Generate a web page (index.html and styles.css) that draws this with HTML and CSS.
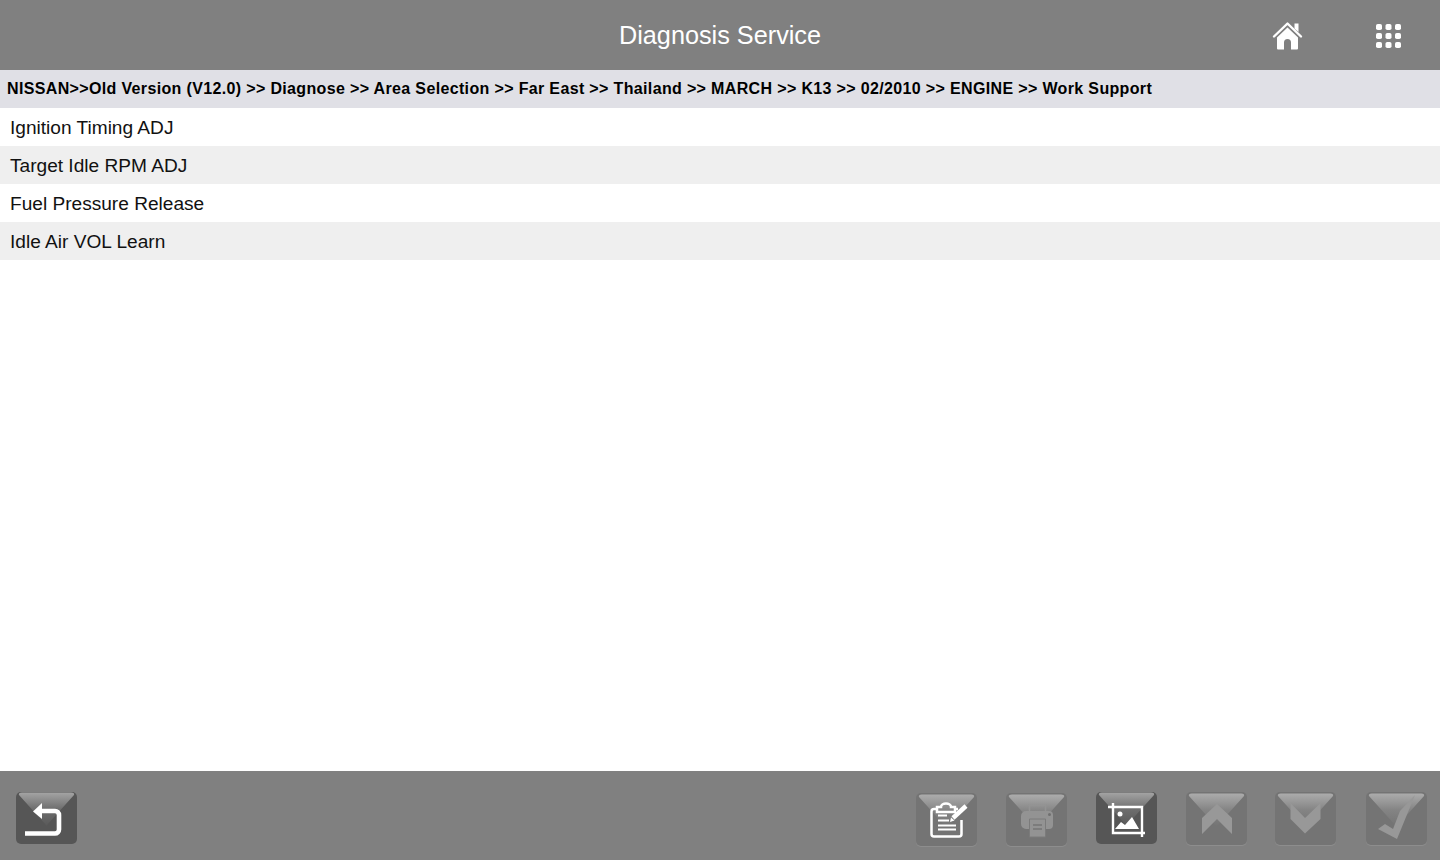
FILE: index.html
```html
<!DOCTYPE html>
<html lang="en">
<head>
<meta charset="utf-8">
<title>Diagnosis Service</title>
<link rel="stylesheet" href="styles.css">
</head>
<body>
<div class="app">
  <header class="topbar">
    <h1 class="title">Diagnosis Service</h1>
    <a class="home-icon">
      <svg width="32" height="32" viewBox="0 0 32 32"><path d="M2 16.500 15.500 3.500 29 16.500" fill="none" stroke="#fff" stroke-width="2.400" stroke-linecap="round" stroke-linejoin="round"/><path d="M22.500 3.500h4v8.500l-4-3.600z" fill="#fff"/><path fill-rule="evenodd" d="M15.500 7.500 26 17.500V28.500a1 1 0 0 1-1 1H6a1 1 0 0 1-1-1V17.500zM12 29.500h7V22.500a3.500 3.500 0 0 0-7 0z" fill="#fff"/></svg>
    </a>
    <a class="grid-icon">
      <svg width="28" height="28" viewBox="0 0 28 28" fill="#fff"><rect x="1" y="2" width="6" height="6" rx="1.800"/><rect x="10.500" y="2" width="6" height="6" rx="1.800"/><rect x="20" y="2" width="6" height="6" rx="1.800"/><rect x="1" y="11" width="6" height="6" rx="1.800"/><rect x="10.500" y="11" width="6" height="6" rx="1.800"/><rect x="20" y="11" width="6" height="6" rx="1.800"/><rect x="1" y="20" width="6" height="6" rx="1.800"/><rect x="10.500" y="20" width="6" height="6" rx="1.800"/><rect x="20" y="20" width="6" height="6" rx="1.800"/></svg>
    </a>
  </header>
  <nav class="crumbs">NISSAN&gt;&gt;Old Version (V12.0) &gt;&gt; Diagnose &gt;&gt; Area Selection &gt;&gt; Far East &gt;&gt; Thailand &gt;&gt; MARCH &gt;&gt; K13 &gt;&gt; 02/2010 &gt;&gt; ENGINE &gt;&gt; Work Support</nav>
  <main class="list">
    <div class="row">Ignition Timing ADJ</div>
    <div class="row">Target Idle RPM ADJ</div>
    <div class="row">Fuel Pressure Release</div>
    <div class="row">Idle Air VOL Learn</div>
  </main>
  <footer class="toolbar">
    <button class="btn btn-dark">
      <svg class="shine" width="61" height="52" viewBox="0 0 61 52"><defs><linearGradient id="g0" x1="0" y1="0" x2="0" y2="1"><stop offset="0" stop-color="#a4a4a4"/><stop offset="0.500" stop-color="#6e6e6e"/><stop offset="1" stop-color="#5a5a5a"/></linearGradient></defs><path d="M6 0.500H55Q59 0.500 58 3L31 33Q30.500 34 30 33L3 3Q2 0.500 6 0.500z" fill="url(#g0)"/>
      <path d="M9 41.500H39a4 4 0 0 0 4-4V23a4 4 0 0 0-4-4H24" fill="none" stroke="#fff" stroke-width="4.600"/><path d="M26 11V27L17 19.500z" fill="#fff"/></svg>
    </button>
    <div class="btn-group">
      <button class="btn btn-low">
        <svg class="shine" width="61" height="52" viewBox="0 0 61 52"><defs><linearGradient id="g1" x1="0" y1="0" x2="0" y2="1"><stop offset="0" stop-color="#acacac"/><stop offset="0.500" stop-color="#848484"/><stop offset="1" stop-color="#747474"/></linearGradient></defs><path d="M6 0.500H55Q59 0.500 58 3L31 33Q30.500 34 30 33L3 3Q2 0.500 6 0.500z" fill="url(#g1)"/>
        <path d="M20 15H18a2.500 2.500 0 0 0-2.500 2.500V40a2.500 2.500 0 0 0 2.500 2.500H43a2.500 2.500 0 0 0 2.500-2.500V26M40 15H42" fill="none" stroke="#fff" stroke-width="2.500"/><path d="M21 18V13H25a5 3.500 0 0 1 10 0H39V18z" fill="none" stroke="#fff" stroke-width="2.500"/><path d="M22 21.500H31M22 26.500H33M22 31.500H40M22 35.500H40" stroke="#fff" stroke-width="2.200"/><path d="M37 24 50 12" stroke="#fff" stroke-width="4.500"/><path d="M34 28 35 23.500 38.500 26.500z" fill="#fff"/></svg>
      </button>
      <button class="btn btn-low">
        <svg class="shine" width="61" height="52" viewBox="0 0 61 52"><path d="M6 0.500H55Q59 0.500 58 3L31 33Q30.500 34 30 33L3 3Q2 0.500 6 0.500z" fill="url(#g1)"/>
        <path d="M23.500 17V11.500H39.500V17" fill="none" stroke="#939393" stroke-width="1.500"/><path d="M20 17H43a4 4 0 0 1 4 4V31a4 4 0 0 1-4 4H20a5 5 0 0 1-5-5V22a5 5 0 0 1 5-5z" fill="#939393"/><path d="M23.500 25H39.500V43H23.500z" fill="#939393" stroke="#7b7b7b"/><path d="M27 31H36M27 35H36" stroke="#767676" stroke-width="1.500"/><circle cx="43.500" cy="20.500" r="1.500" fill="#707070"/></svg>
      </button>
      <button class="btn btn-dark btn-dark-low">
        <svg class="shine" width="61" height="52" viewBox="0 0 61 52"><path d="M6 0.500H55Q59 0.500 58 3L31 33Q30.500 34 30 33L3 3Q2 0.500 6 0.500z" fill="url(#g0)"/>
        <path d="M12 15H46V45M17 11V41H49" fill="none" stroke="#fff" stroke-width="2.400"/><circle cx="24" cy="22" r="2.500" fill="#fff"/><path d="M19 37 25 30 29 33 36 25 43 37z" fill="#fff"/></svg>
      </button>
      <button class="btn">
        <svg class="shine" width="61" height="52" viewBox="0 0 61 52"><path d="M6 0.500H55Q59 0.500 58 3L31 33Q30.500 34 30 33L3 3Q2 0.500 6 0.500z" fill="url(#g1)"/><path d="M31 11 46 25V41L31 26 16 41V25z" fill="#989898"/></svg>
      </button>
      <button class="btn btn-shift">
        <svg class="shine" width="61" height="52" viewBox="0 0 61 52"><path d="M6 0.500H55Q59 0.500 58 3L31 33Q30.500 34 30 33L3 3Q2 0.500 6 0.500z" fill="url(#g1)"/><path d="M15.500 10 30 25 45.500 10V26L30 40.500 15.500 26z" fill="#989898"/></svg>
      </button>
      <button class="btn">
        <svg class="shine" width="61" height="52" viewBox="0 0 61 52"><path d="M6 0.500H55Q59 0.500 58 3L31 33Q30.500 34 30 33L3 3Q2 0.500 6 0.500z" fill="url(#g1)"/><path d="M49 2 34 18 27 36 19 31 12 36 31 46z" fill="#989898"/></svg>
      </button>
    </div>
  </footer>
</div>
</body>
</html>
```
FILE: styles.css
```css
* { box-sizing: border-box; }
html, body { margin: 0; padding: 0; height: 100%; }
body { font-family: "Liberation Sans", Arial, sans-serif; background: #fff; color: #000; overflow: hidden; }
.app { display: flex; flex-direction: column; height: 860px; width: 1440px; }

.topbar { height: 70px; background: #808080; position: relative; display: flex; align-items: center; justify-content: center; }
.title { margin: 0; font-size: 25.250px; font-weight: 400; color: #fff; }
.home-icon, .grid-icon { position: absolute; display: block; line-height: 0; }
.home-icon { left: 1272px; top: 20px; }
.grid-icon { left: 1375px; top: 22px; }

.crumbs { height: 38px; background: #e0e0e6; padding-left: 7px; display: flex; align-items: center; font-size: 16px; font-weight: 700; letter-spacing: 0.350px; color: #000; white-space: nowrap; }

.list { flex: 1; display: flex; flex-direction: column; }
.row { height: 38px; padding: 1px 0 0 10px; display: flex; align-items: center; font-size: 19.100px; color: #111; }
.row:nth-child(even) { background: #efefef; }

.toolbar { height: 89px; background: #808080; display: flex; justify-content: space-between; padding: 21px 13px 0 16px; }
.btn-group { display: flex; gap: 29px; align-items: flex-start; }
.btn { width: 61px; height: 53px; padding: 0; border: 0; border-radius: 5px; background: #747474; box-shadow: 0 1px 0 #8d8d8d; display: block; line-height: 0; }
.btn-dark { background: #565656; box-shadow: none; height: 52px; }
.btn-low { margin-top: 1px; }
.btn-shift { margin-left: -1px; margin-right: 1px; }
.shine { display: block; }
```
